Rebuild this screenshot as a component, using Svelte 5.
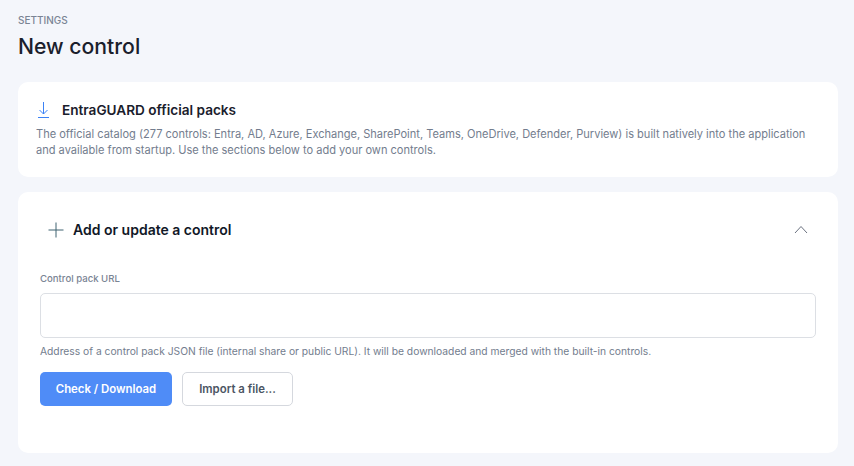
<script lang="ts">
	let url = '';
</script>

<div class="page">
	<p class="crumb">SETTINGS</p>
	<h1 class="title">New control</h1>

	<section class="card info">
		<div class="info-head">
			<svg class="down" width="16" height="18" viewBox="0 0 16 18" fill="none" stroke="#3b82f6" stroke-width="1">
				<path d="M7.500 1v12M3.500 9l4 4 4-4M2 16.500h11" />
			</svg>
			<h2>EntraGUARD official packs</h2>
		</div>
		<p class="info-text">
			The official catalog (277 controls: Entra, AD, Azure, Exchange, SharePoint, Teams, OneDrive, Defender, Purview) is built natively into the application and available from startup. Use the sections below to add your own controls.
		</p>
	</section>

	<section class="card form">
		<div class="form-head">
			<svg width="16" height="16" viewBox="0 0 16 16" fill="none" stroke="#3f6270" stroke-width="1">
				<path d="M8 0.500v15M0.500 8h15" />
			</svg>
			<h2>Add or update a control</h2>
			<svg class="chev" width="14" height="9" viewBox="0 0 14 9" fill="none" stroke="#6b7280" stroke-width="1">
				<path d="M1 8l6-6.500L13 8" />
			</svg>
		</div>
		<label for="pack-url">Control pack URL</label>
		<input id="pack-url" type="text" bind:value={url} />
		<p class="hint">Address of a control pack JSON file (internal share or public URL). It will be downloaded and merged with the built-in controls.</p>
		<div class="actions">
			<button class="primary">Check / Download</button>
			<button class="secondary">Import a file...</button>
		</div>
	</section>
</div>

<style>
	:global(body) {
		background: #f4f6fb;
		font-family: Inter, "Noto Sans", sans-serif;
	}

	.page {
		display: flex;
		flex-direction: column;
		height: 466px;
		box-sizing: border-box;
		padding: 14px 16px 0 18px;
		overflow: hidden;
	}

	.crumb {
		margin: 0;
		font-size: 10px;
		line-height: 12px;
		font-weight: 500;
		color: #7a8494;
	}

	.title {
		margin: 7px 0 0;
		font-size: 21.2px;
		line-height: 26px;
		font-weight: 500;
		color: #1a202c;
	}

	.card {
		background: #fff;
		border-radius: 10px;
	}

	.info {
		margin-top: 23px;
		height: 95px;
		box-sizing: border-box;
		padding: 19px 18px 0;
	}

	.info-head {
		display: flex;
		align-items: center;
		gap: 10px;
		height: 18px;
	}

	.info-head h2 {
		margin: 0;
		font-size: 13.6px;
		font-weight: 600;
		color: #1a202c;
	}

	.info-text {
		margin: 7px 0 0;
		font-size: 11.06px;
		line-height: 16px;
		color: #737d8e;
	}

	.form {
		margin-top: 15px;
		height: 261px;
		box-sizing: border-box;
		padding: 0 22px;
	}

	.form-head {
		display: flex;
		align-items: center;
		gap: 9px;
		height: 75px;
		padding: 0 8px;
	}

	.form-head h2 {
		margin: 0;
		font-size: 14px;
		font-weight: 600;
		color: #111827;
	}

	.chev {
		margin-left: auto;
	}

	label {
		display: block;
		margin-top: 6px;
		font-size: 9.6px;
		line-height: 12px;
		font-weight: 500;
		color: #7a8494;
	}

	input {
		display: block;
		width: 100%;
		height: 45px;
		box-sizing: border-box;
		margin-top: 8px;
		border: 1px solid #dcdfe4;
		border-radius: 5px;
		background: #fff;
	}

	.hint {
		margin: 6px 0 0;
		font-size: 10.27px;
		line-height: 14px;
		color: #737d8e;
	}

	.actions {
		display: flex;
		gap: 10px;
		margin-top: 14px;
	}

	button {
		height: 34px;
		box-sizing: border-box;
		border-radius: 5px;
		font-family: inherit;
		font-size: 11.4px;
		font-weight: 600;
	}

	.primary {
		width: 132px;
		border: none;
		background: #4f8cf7;
		color: #fff;
	}

	.secondary {
		width: 111px;
		border: 1px solid #d5d8de;
		background: #fff;
		color: #4b5563;
	}
</style>
